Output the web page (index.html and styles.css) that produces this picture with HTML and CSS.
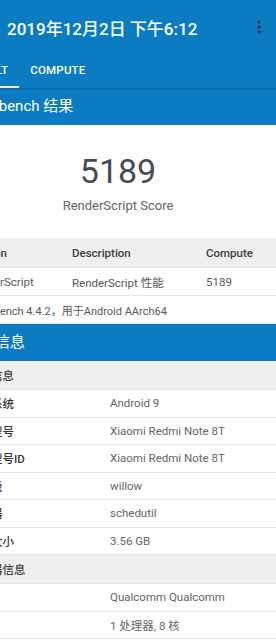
FILE: index.html
```html
<!DOCTYPE html>
<html lang="zh-CN">
<head>
    <meta charset="UTF-8">
    <meta name="viewport" content="width=device-width, initial-scale=1.0">
    <title>Geekbench 结果</title>
    <link rel="stylesheet" href="styles.css">
</head>
<body>
    <div class="screen">
        <header class="appbar">
            <div class="toolbar">
                <h1 class="title">2019年12月2日 下午6:12</h1>
                <span class="menu">
                    <svg width="4" height="14" viewBox="0 0 4 14">
                        <circle cx="2" cy="2" r="1.6"/>
                        <circle cx="2" cy="7" r="1.6"/>
                        <circle cx="2" cy="12" r="1.6"/>
                    </svg>
                </span>
            </div>
            <nav class="tabs">
                <a class="tab active">RESULT</a>
                <a class="tab">COMPUTE</a>
            </nav>
        </header>

        <h2 class="band">Geekbench 结果</h2>

        <div class="score">
            <div class="score-value">5189</div>
            <div class="score-label">RenderScript Score</div>
        </div>

        <div class="results">
            <div class="res-row res-head">
                <span>Section</span>
                <span>Description</span>
                <span>Compute</span>
            </div>
            <div class="res-row">
                <span>RenderScript</span>
                <span>RenderScript 性能</span>
                <span>5189</span>
            </div>
            <div class="res-row res-note">Geekbench 4.4.2，用于Android AArch64</div>
        </div>

        <h2 class="band">系统信息</h2>

        <div class="info">
            <div class="info-sub">系统信息</div>
            <div class="info-row"><span class="key">操作系统</span><span class="val">Android 9</span></div>
            <div class="info-row"><span class="key">设备型号</span><span class="val">Xiaomi Redmi Note 8T</span></div>
            <div class="info-row"><span class="key">设备型号ID</span><span class="val">Xiaomi Redmi Note 8T</span></div>
            <div class="info-row"><span class="key">主机板</span><span class="val">willow</span></div>
            <div class="info-row"><span class="key">调速器</span><span class="val">schedutil</span></div>
            <div class="info-row"><span class="key">内存大小</span><span class="val">3.56 GB</span></div>
            <div class="info-sub">处理器信息</div>
            <div class="info-row"><span class="key">名称</span><span class="val">Qualcomm Qualcomm</span></div>
            <div class="info-row"><span class="key">拓扑</span><span class="val">1 处理器, 8 核</span></div>
        </div>
    </div>
</body>
</html>
```

FILE: styles.css
```css
body {
    margin: 0;
    overflow: hidden;
    background-color: white;
    font-family: Roboto, "Noto Sans CJK SC", sans-serif;
}
.screen {
    margin-left: -48px;
    width: 332px;
}
.appbar {
    position: relative;
    z-index: 1;
    background-color: #0b7cc1;
    color: white;
    box-shadow: 0 1px 2px rgba(0,0,0,0.25);
}
.toolbar {
    display: flex;
    align-items: center;
    height: 54px;
    padding-left: 55px;
}
.title {
    flex: 1;
    margin: 0;
    font-size: 17px;
    font-weight: 500;
}
.menu {
    display: flex;
    margin-right: 23px;
}
.menu svg {
    fill: #1e2d3d;
}
.tabs {
    display: flex;
    height: 34px;
    padding-left: 4px;
}
.tab {
    display: flex;
    align-items: center;
    padding: 0 11px;
    font-size: 11.5px;
    font-weight: 500;
    letter-spacing: 0.2px;
    border-bottom: 2px solid transparent;
}
.tab.active {
    border-bottom-color: #e6edf2;
}
.band {
    margin: 0;
    height: 37px;
    line-height: 37px;
    padding-left: 13px;
    background-color: #0b7cc1;
    color: white;
    font-size: 15px;
    font-weight: 400;
}
.score {
    display: flex;
    flex-direction: column;
    align-items: center;
    padding: 26px 0 24px;
}
.score-value {
    font-size: 34px;
    line-height: 40px;
    color: #474c53;
}
.score-label {
    margin-top: 7px;
    font-size: 13px;
    line-height: 16px;
    color: #666;
}
.res-row {
    display: grid;
    grid-template-columns: 104px 134px 1fr;
    align-items: center;
    height: 28px;
    padding-left: 16px;
    box-sizing: border-box;
    border-bottom: 1px solid #e6e6e6;
    font-size: 11.5px;
    color: #5a5a5a;
}
.res-head {
    height: 30px;
    background-color: #efefef;
    font-weight: 500;
    color: #3c3c3c;
}
.res-note {
    display: flex;
    padding-left: 17px;
    font-size: 11px;
}
.info-sub {
    display: flex;
    align-items: center;
    height: 29px;
    padding-left: 16px;
    box-sizing: border-box;
    background-color: #efefef;
    border-bottom: 1px solid #e6e6e6;
    font-size: 11.5px;
    font-weight: 500;
    color: #3c3c3c;
}
.info-row {
    display: grid;
    grid-template-columns: 142px 1fr;
    align-items: center;
    height: 27.5px;
    padding-left: 16px;
    box-sizing: border-box;
    border-bottom: 1px solid #e6e6e6;
    font-size: 11.5px;
}
.key {
    font-weight: 500;
    color: #333;
}
.val {
    color: #666;
}
```
